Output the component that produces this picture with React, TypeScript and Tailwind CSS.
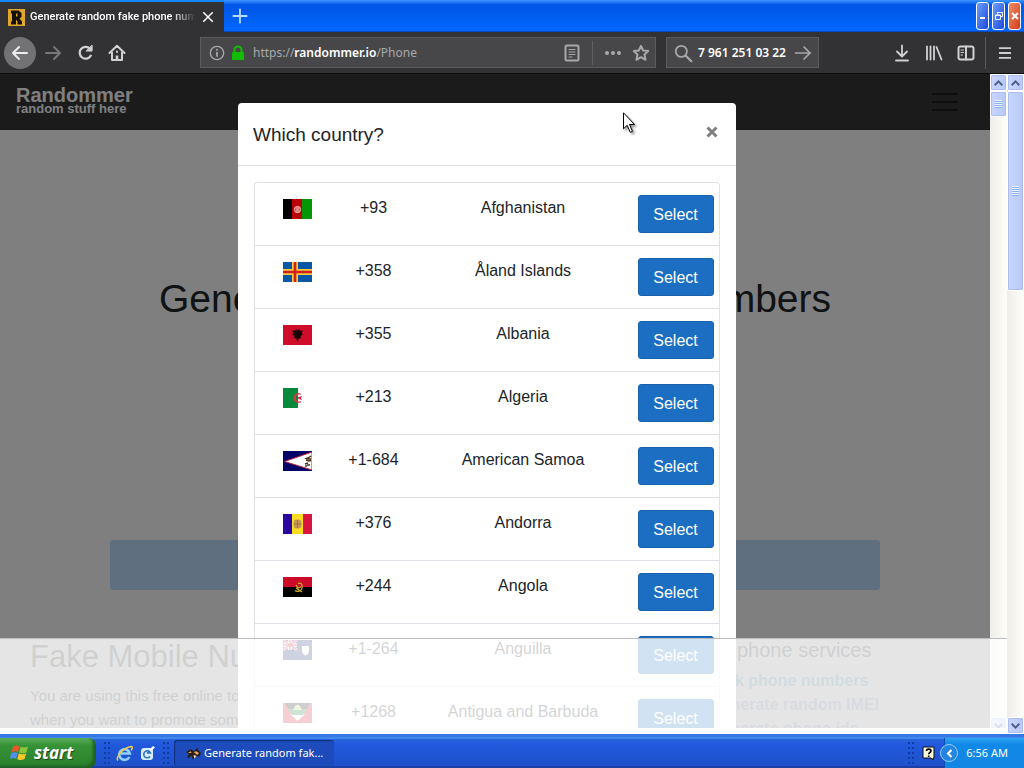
import React from "react";

const ARIAL = "font-['Liberation_Sans',Arial,sans-serif]";
const TAHOMA = "font-['Noto_Sans',Tahoma,sans-serif]";

type Country = { code: string; name: string; flag: React.ReactNode };

const countries: Country[] = [
  {
    code: "+93",
    name: "Afghanistan",
    flag: (
      <>
        <rect width="10" height="20" fill="#000" />
        <rect x="9" width="11" height="20" fill="#b80008" />
        <rect x="19" width="10" height="20" fill="#039607" />
        <circle cx="14.5" cy="10.5" r="3.2" fill="#d9564e" stroke="#e9a6a0" strokeWidth="1" />
        <path d="M12.5 9h4M13 11h3M12.5 13h4" stroke="#f3c9c2" strokeWidth=".8" />
      </>
    ),
  },
  {
    code: "+358",
    name: "Åland Islands",
    flag: (
      <>
        <rect width="29" height="20" fill="#0a58a5" />
        <path d="M12 0v20M0 10h29" stroke="#fbc93c" strokeWidth="6" />
        <path d="M12 0v20M0 10h29" stroke="#d2201f" strokeWidth="2.6" />
      </>
    ),
  },
  {
    code: "+355",
    name: "Albania",
    flag: (
      <>
        <rect width="29" height="20" fill="#cf0d2b" />
        <path d="M9.5 5l2.5 1 1-2 1.5 1.5L16 4l1 2 2.5-1-.5 3 .5 2-2 1 .5 2-2 .5-1.5 3-1.5-3-2-.5.5-2-2-1 .5-2z" fill="#1b0207" />
      </>
    ),
  },
  {
    code: "+213",
    name: "Algeria",
    flag: (
      <>
        <rect width="29" height="20" fill="#fff" />
        <rect width="15" height="20" fill="#078a3d" />
        <path d="M18 6.3a4.6 4.6 0 1 0 0 7.400 4 4 0 1 1 0-7.400z" fill="#d8393f" stroke="#d8393f" strokeWidth=".6" />
        <path d="M14.500 10l4-1.500-1.200 1.500 1.200 1.500z" fill="#d21034" stroke="#d21034" strokeWidth=".7" />
      </>
    ),
  },
  {
    code: "+1-684",
    name: "American Samoa",
    flag: (
      <>
        <rect width="29" height="20" fill="#050266" />
        <path d="M1.500 10.500L29 1v18z" fill="#fff" stroke="#b9223c" strokeWidth="1" />
        <path d="M28 5l-2 1.500-2.500 1 2.500 .500 2 0M23 9l3 1 2-.5M22 13l3-1M22 15l2 0M24 14h3" stroke="#4a3018" strokeWidth="1.400" fill="none" />
      </>
    ),
  },
  {
    code: "+376",
    name: "Andorra",
    flag: (
      <>
        <rect width="10" height="20" fill="#2b06a0" />
        <rect x="9" width="11" height="20" fill="#fcdc20" />
        <rect x="20" width="9" height="20" fill="#d81540" />
        <rect x="10.500" y="5.500" width="8" height="9" rx="3" fill="#c59a55" />
        <path d="M14.500 6v8M11 10h7" stroke="#a3703f" />
      </>
    ),
  },
  {
    code: "+244",
    name: "Angola",
    flag: (
      <>
        <rect width="29" height="10" fill="#cc0b29" />
        <rect y="10" width="29" height="10" fill="#000" />
        <path d="M15 6.500c4-1.500 5 3 3.500 6-1.500 2-4.500 2.500-6.500 1M13 8l2 3 3-1M13 11l6 4" stroke="#d3b52c" strokeWidth="1.200" fill="none" />
      </>
    ),
  },
  {
    code: "+1-264",
    name: "Anguilla",
    flag: (
      <>
        <rect width="29" height="20" fill="#0a1c6b" />
        <path d="M0 0l14 10M14 0L0 10" stroke="#fff" strokeWidth="2.400" />
        <path d="M7 0v10M0 5h14" stroke="#fff" strokeWidth="3.600" />
        <path d="M7 0v10M0 5h14M0 0l14 10M14 0L0 10" stroke="#c8102e" strokeWidth="1.300" />
        <path d="M19 6h7v5c0 3-3.500 4.500-3.500 4.500S19 14 19 11z" fill="#fff" />
      </>
    ),
  },
  {
    code: "+1268",
    name: "Antigua and Barbuda",
    flag: (
      <>
        <rect width="29" height="20" fill="#ce1126" />
        <path d="M7 11h15L14.500 18z" fill="#fff" />
        <path d="M2 0h25l-3 6H5z" fill="#0b0b0b" />
        <path d="M5 6h19l-4 6H9z" fill="#0c7a2c" />
        <path d="M10 7l2-4 2.500-1.500L17 3l2 4z" fill="#b9d36a" />
      </>
    ),
  },
];

function Icon({ children, size = 18, className = "" }: { children: React.ReactNode; size?: number; className?: string }) {
  return (
    <svg width={size} height={size} viewBox="0 0 18 18" fill="none" stroke="currentColor" strokeWidth="2" strokeLinecap="round" strokeLinejoin="round" className={className} aria-hidden="true">
      {children}
    </svg>
  );
}

function ToolButton({ label, dim = false, children }: { label: string; dim?: boolean; children: React.ReactNode }) {
  return (
    <button aria-label={label} className={`flex size-8 shrink-0 items-center justify-center ${dim ? "text-[#77777a]" : "text-[#d0d0d2]"}`}>
      {children}
    </button>
  );
}

function TitleBar() {
  return (
    <header className="flex h-8 shrink-0 bg-linear-to-b from-[#3d95ff] via-[#0055e6] via-15% to-[#0068ff] shadow-[inset_0_-1px_0_#0048c8]">
      <div className="flex h-8 w-56 items-center border-t-2 border-[#1286f7] bg-[#323234] pr-2 pl-2">
        <svg width="17" height="17" viewBox="0 0 17 17" aria-hidden="true" className="shrink-0">
          <rect width="17" height="17" fill="#e0a828" />
          <path d="M3 1.500h7.500l3 2.500v4l-2 1.500 2.500 3v3h-4.500v-3L8 10.500v5H3V13l1-1V5L3 4z" fill="#15110a" />
          <path d="M8 4.500h1.500v3H8z" fill="#e0a828" />
        </svg>
        <span className="ml-[5px] flex-1 overflow-hidden mask-r-from-85% font-['Roboto',Tahoma,sans-serif] text-[11px] leading-4 font-medium whitespace-nowrap text-white">Generate random fake phone num</span>
        <button aria-label="Close tab" className="ml-1 flex w-4 justify-center text-white">
          <Icon size={14}><path d="M3.500 3.500l11 11M14.500 3.500l-11 11" /></Icon>
        </button>
      </div>
      <button aria-label="New tab" className="flex w-8 items-center justify-center text-[#b9dcff]">
        <Icon size={16}><path d="M9 1.500v15M1.500 9h15" /></Icon>
      </button>
      <div className="ml-auto flex items-start gap-[3px] pt-[2px] pr-[3px]">
        <button aria-label="Minimize" className="flex h-7 w-[13px] items-center justify-center rounded-[3px] border border-white bg-linear-to-br from-[#6f9dfb] to-[#1b48d6]">
          <span className="mt-1 h-[2px] w-[5px] bg-white" />
        </button>
        <button aria-label="Restore" className="flex h-7 w-[13px] items-center justify-center rounded-[3px] border border-white bg-linear-to-br from-[#6f9dfb] to-[#1b48d6]">
          <svg width="8" height="8" viewBox="0 0 8 8" fill="none" stroke="#fff" aria-hidden="true"><path d="M2.500 2.500v-2h5v4h-2M.5 3h5v4.500h-5z" /><path d="M.5 3.500h5" /></svg>
        </button>
        <button aria-label="Close" className="flex h-7 w-[13px] items-center justify-center rounded-[3px] border border-white bg-linear-to-br from-[#f08a68] to-[#cf3a0c]">
          <svg width="8" height="8" viewBox="0 0 8 8" stroke="#fff" strokeWidth="2" aria-hidden="true"><path d="M1 1l6 6M7 1L1 7" /></svg>
        </button>
      </div>
    </header>
  );
}

function ToolBar() {
  return (
    <nav aria-label="Browser" className={`flex h-[42px] shrink-0 items-center border-b border-[#0c0c0d] bg-[#323234] pr-[3px] pl-1 ${TAHOMA}`}>
      <button aria-label="Back" className="mr-px flex size-8 shrink-0 items-center justify-center rounded-full bg-[#727274] text-[#ececec]">
        <Icon><path d="M16 9H2M8 3L2 9l6 6" /></Icon>
      </button>
      <ToolButton label="Forward" dim><Icon><path d="M2 9h14M10 3l6 6-6 6" /></Icon></ToolButton>
      <ToolButton label="Reload">
        <Icon size={17}><path d="M13.800 5A6.300 6.300 0 1 0 15 11.500" strokeLinecap="butt" strokeWidth="2.400" /><path d="M16 1.500v6h-6z" fill="currentColor" strokeWidth="1" /></Icon>
      </ToolButton>
      <ToolButton label="Home">
        <Icon><path d="M1.500 9L9 1.800 16.500 9M4 8.500v7.500h10V8.500" /><path d="M9 16v-4.500" strokeWidth="2.600" strokeLinecap="butt" /><path d="M9 7.500v.4" /></Icon>
      </ToolButton>
      <div className="ml-[67px] flex h-[31px] min-w-0 flex-1 items-center border border-[#5b5b5d] bg-[#474749] pr-[6px] pl-2 text-[#a8a8aa]">
        <Icon size={16} className="shrink-0"><circle cx="9" cy="9" r="7.500" strokeWidth="1.500" /><path d="M9 8.500v4" /><path d="M9 5.300v.2" /></Icon>
        <svg width="14" height="16" viewBox="0 0 14 16" className="ml-[6px] shrink-0" aria-hidden="true"><path d="M3.500 8V5a3.500 3.500 0 0 1 7 0v3" fill="none" stroke="#12bc00" strokeWidth="2" /><rect x="1" y="7" width="12" height="8" rx="1" fill="#12bc00" /></svg>
        <div role="textbox" aria-label="Address" className="ml-2 flex-1 text-[12px] leading-4 whitespace-nowrap">
          https://<span className="font-semibold text-white">randommer.io</span>/Phone
        </div>
        <button aria-label="Reader view" className="flex w-4 justify-center">
          <Icon size={18} className="shrink-0"><rect x="2.500" y="1.500" width="13" height="15" rx="1.500" /><path d="M6 5.500h6M6 8h6M6 10.500h6M6 13h3" strokeWidth="1" /></Icon>
        </button>
        <span className="ml-3 h-6 w-px bg-[#5f5f61]" />
        <button aria-label="Page actions" className="ml-3 flex w-4 justify-center">
          <svg width="18" height="6" viewBox="0 0 18 6" fill="currentColor" aria-hidden="true" className="shrink-0"><circle cx="3" cy="3" r="2" /><circle cx="9" cy="3" r="2" /><circle cx="15" cy="3" r="2" /></svg>
        </button>
        <button aria-label="Bookmark" className="ml-3 flex w-4 justify-center">
          <Icon size={18} className="shrink-0"><path d="M9 1.800l2.200 4.700 5 .6-3.700 3.500 1 5.200L9 13.200l-4.500 2.600 1-5.200L1.800 7.100l5-.6z" /></Icon>
        </button>
      </div>
      <div className="mr-[67px] ml-[10px] flex h-[31px] w-[153px] shrink-0 items-center border border-[#5b5b5d] bg-[#474749] px-[6px] text-[#a8a8aa]">
        <Icon size={20} className="shrink-0"><circle cx="7.500" cy="7.500" r="5" strokeWidth="1.600" /><path d="M11.500 11.500l5 5" /></Icon>
        <div className="ml-1 flex flex-1 justify-end overflow-hidden">
          <input aria-label="Search" defaultValue="7 961 251 03 22" className="w-[92px] shrink-0 bg-transparent text-[12px] leading-4 font-semibold text-white outline-none" />
        </div>
        <button aria-label="Go" className="ml-1"><Icon size={18}><path d="M1.500 9h15M10 3l6 6-6 6" strokeWidth="1.700" /></Icon></button>
      </div>
      <ToolButton label="Downloads"><Icon><path d="M9 1.500v10.500M4 7.500L9 12.500l5-5M3 16.500h12" strokeWidth="1.800" /></Icon></ToolButton>
      <ToolButton label="Library"><Icon><path d="M2 2.500v13M5.500 2.500v13M9 2.500v13M11.500 3l5 12.500" strokeWidth="1.800" /></Icon></ToolButton>
      <ToolButton label="Sidebars"><Icon><rect x="1.500" y="2.500" width="15" height="13" rx="2" /><path d="M9 2.500v13" /><path d="M4 6h2.500M4 8.500h2.500M4 11h1.500" strokeWidth="1.100" /></Icon></ToolButton>
      <span className="mx-[3px] h-8 w-px bg-[#5a5a5c]" />
      <ToolButton label="Menu"><Icon size={16}><path d="M3 3.500h12M3 9h12M3 14.500h12" /></Icon></ToolButton>
    </nav>
  );
}

function ScrollBar({ thumb, grip }: { thumb: string; grip: string }) {
  const box = "flex shrink-0 items-center justify-center rounded-[2px] border border-white bg-linear-to-r from-[#c9d6fd] to-[#b7c9fa] shadow-[inset_0_0_0_1px_#adbdf0]";
  return (
    <div className="flex w-[17px] shrink-0 flex-col bg-linear-to-r from-[#efeee8] to-[#fdfdfa]">
      <button aria-label="Scroll up" className={`${box} h-[17px]`}>
        <svg width="9" height="6" viewBox="0 0 9 6" fill="none" stroke="#4d6185" strokeWidth="2" aria-hidden="true"><path d="M.7 5.200L4.500 1.400l3.800 3.800" /></svg>
      </button>
      <div className={`${box} ${thumb}`}>
        <div className={`w-[7px] bg-[repeating-linear-gradient(to_bottom,#eef4fe_0_1px,#8cb0f8_1px_2px)] ${grip}`} />
      </div>
      <div className="flex-1" />
      <button aria-label="Scroll down" className={`${box} h-[17px]`}>
        <svg width="9" height="6" viewBox="0 0 9 6" fill="none" stroke="#4d6185" strokeWidth="2" aria-hidden="true"><path d="M.7.8l3.800 3.800L8.300.8" /></svg>
      </button>
    </div>
  );
}

function SitePage() {
  return (
    <div className="flex h-full flex-col overflow-hidden bg-white">
      <div className="flex h-14 shrink-0 items-center justify-between bg-[#343635] px-4">
        <a href="#home" className="text-white">
          <span className="block text-[20px] leading-[14px] font-bold">Randommer</span>
          <span className="block text-[13px] leading-[14px] font-bold">random stuff here</span>
        </a>
        <button aria-label="Toggle navigation" className="mr-[14px] text-[#1b1d1c]">
          <svg width="30" height="20" viewBox="0 0 30 20" stroke="currentColor" strokeWidth="2" aria-hidden="true"><path d="M2 2h26M2 10h26M2 18h26" /></svg>
        </button>
      </div>
      <div className="flex shrink-0 flex-col items-center px-[110px] pt-[145px]">
        <h1 className="text-[39px] leading-[48px] whitespace-nowrap text-[#212529]">Generate random fake phone numbers</h1>
        <button aria-label="Choose country" className="mt-[217px] h-[50px] w-full rounded-[3px] bg-[#bfdfff]" />
      </div>
      <div className="flex shrink-0 justify-between pt-12 pr-[111px] pl-[30px] text-[#212529]">
        <div>
          <h2 className="text-[31px] leading-[38px] whitespace-nowrap">Fake Mobile Numbers</h2>
          <p className="mt-2 text-[15px] leading-6 whitespace-nowrap">
            You are using this free online tool to generate numbers
            <br />
            when you want to promote some services
          </p>
        </div>
        <div className="text-[16px] leading-6 whitespace-nowrap">
          <h3 className="text-[20px]">All phone services</h3>
          <ul className="mt-[7px] font-bold text-[#3aa0c8]">
            <li><a href="#bulk">Bulk phone numbers</a></li>
            <li className="text-[#7597c8]"><a href="#imei">Generate random IMEI</a></li>
            <li className="text-[#7597c8]"><a href="#ids">Generate phone ids</a></li>
          </ul>
        </div>
      </div>
    </div>
  );
}

function CountryModal() {
  return (
    <div className="absolute inset-0 flex items-start justify-center overflow-hidden bg-black/50 pt-[29px] pr-4">
      <div role="dialog" aria-labelledby="modal-title" className="relative w-[498px] rounded-[4px] bg-white text-[#212529]">
        <div className="flex h-[63px] items-start justify-between border-b border-[#dee2e6] px-[15px] pt-[17px]">
          <h5 id="modal-title" className="text-[19px] leading-[30px]">Which country?</h5>
          <button aria-label="Close" className="mt-[6px] mr-[3px] text-[#7f7f7f]">
            <svg width="12" height="12" viewBox="0 0 12 12" stroke="currentColor" strokeWidth="3" aria-hidden="true"><path d="M1.500 1.500l9 9M10.500 1.500l-9 9" /></svg>
          </button>
        </div>
        <div className="p-4">
          <table className="w-full table-fixed border-separate border-spacing-0 rounded-[4px] border-x border-t border-[#dee2e6] text-center text-[16px] leading-6">
            <colgroup>
              <col className="w-[78px]" />
              <col className="w-[81px]" />
              <col />
              <col className="w-[87px]" />
            </colgroup>
            <tbody>
              {countries.map((c) => (
                <tr key={c.name} className="h-[63px] align-top">
                  <td className="border-b border-[#dee2e6] pt-4 pl-7">
                    <svg width="29" height="20" viewBox="0 0 29 20" role="img" aria-label={`Flag of ${c.name}`} className="block">{c.flag}</svg>
                  </td>
                  <td className="border-b border-[#dee2e6] pt-[13px]">{c.code}</td>
                  <td className="border-b border-[#dee2e6] pt-[13px]">{c.name}</td>
                  <td className="border-b border-[#dee2e6] pt-3">
                    <button className="h-[38px] w-[76px] rounded-[3px] border border-[#1861ac] bg-[#1b6ec2] pt-px text-white">Select</button>
                  </td>
                </tr>
              ))}
            </tbody>
          </table>
        </div>
        <svg width="14" height="23" viewBox="0 0 14 23" className="absolute top-[9px] left-[385px] drop-shadow-[2px_2px_1px_#00000066]" aria-hidden="true">
          <path d="M.5.8v16l3.700-3.500 3 7 2.300-1-3-6.800h5z" fill="#fff" stroke="#000" />
        </svg>
      </div>
    </div>
  );
}

function Grip() {
  return (
    <svg width="7" height="22" viewBox="0 0 7 22" fill="#123da0" aria-hidden="true" className="shrink-0">
      {[0, 5, 10, 15, 20].map((y) => <path key={y} d={`M0 ${y}h2v2h-2zM4 ${y}h2v2h-2z`} />)}
    </svg>
  );
}

function TaskBar() {
  return (
    <footer className={`flex h-[34px] shrink-0 items-end bg-linear-to-b from-[#2f6fd8] via-[#2158dd] via-30% to-[#1e50c8] shadow-[inset_0_3px_0_#3478e4,inset_0_5px_0_#4288ec,inset_0_-2px_0_#1941a5] ${TAHOMA}`}>
      <button className="flex h-[30px] w-24 items-center rounded-r-[8px] bg-linear-to-b from-[#5cad5c] via-[#369336] via-25% to-[#2a7f2c] pl-[10px] shadow-[inset_-3px_-2px_3px_#1c5f22]">
        <svg width="20" height="18" viewBox="0 0 20 18" aria-hidden="true">
          <path d="M3 2.500C5 1 7.500 1.200 9.500 2.300L8 8C6 7 3.800 7 1.500 8.200z" fill="#e8592b" />
          <path d="M10.500 2.800c2.500 1.200 5 1 7.500-.3l-1.600 5.700c-2.200 1.200-5 1.200-7.300.2z" fill="#8cc63e" />
          <path d="M1.200 9.300C3.500 8 5.800 8 7.700 9l-1.500 5.700c-2-1-4.200-1-6.400.2z" fill="#4f8ff0" />
          <path d="M8.800 9.500c2.400 1.100 5 1.100 7.300-.2L14.500 15c-2.300 1.300-4.900 1.300-7.200.2z" fill="#fcc92d" />
        </svg>
        <span className="ml-1 text-[17px] leading-6 font-bold text-white italic [text-shadow:1px_1px_1px_#17491b]">start</span>
      </button>
      <div className="flex h-[30px] flex-1 items-center pl-2">
        <Grip />
        <a href="#browser" aria-label="Internet Explorer" className="ml-[5px]">
          <svg width="17" height="17" viewBox="0 0 17 17" fill="none" aria-hidden="true">
            <path d="M13.300 12A5.300 5.300 0 1 1 13.800 8.500H5" stroke="#8fd2ff" strokeWidth="2.600" />
            <path d="M2 15.500C-1 13 6 3 15.500 1.500c1.200 0 1 2-.5 4" stroke="#f6c84b" strokeWidth="1.500" />
          </svg>
        </a>
        <a href="#desktop" aria-label="Show desktop" className="ml-[6px]">
          <svg width="17" height="17" viewBox="0 0 17 17" aria-hidden="true">
            <rect x="2" y="3" width="12" height="12" rx="3" fill="#d7ecff" />
            <path d="M11 11.500A3.500 3.500 0 1 1 11.500 8H8M8 8.500l6-6" fill="none" stroke="#2b6fb8" strokeWidth="1.500" />
            <path d="M10 5l4-4 2 1.500-4.500 4z" fill="#fff" />
          </svg>
        </a>
        <div className="ml-[7px]"><Grip /></div>
        <button className="ml-1 flex h-[26px] w-40 items-center rounded-[3px] bg-[#1d4bbb] pl-3 text-[11px] leading-4 text-white shadow-[inset_1px_1px_1px_#122f80]">
          <svg width="15" height="14" viewBox="0 0 16 14" aria-hidden="true">
            <path d="M0 6l5-3 4 2 3-4 1 3 3 3-2 4-3-1-2 3H7L6 10l-3 2H1l2-4z" fill="#2a1c14" />
            <path d="M8 6l3-1 3 2-2 2zM2 7l3-2 1 2z" fill="#e0a45a" />
            <path d="M8 9l3 1-2 3z" fill="#f2e2c8" />
          </svg>
          <span className="ml-[3px] truncate">Generate random fak...</span>
        </button>
        <div className="ml-auto"><Grip /></div>
        <svg width="14" height="15" viewBox="0 0 14 15" className="mr-2 ml-[7px]" aria-hidden="true">
          <path d="M1 1h11v11h-1v2l-2-2H1z" fill="#fbf9d8" stroke="#111" />
          <path d="M4.500 5c0-2.500 4.500-2.500 4.500 0 0 1.500-2.300 1.500-2.300 3.300M6.700 9.500V11" fill="none" stroke="#000" strokeWidth="1.600" />
        </svg>
      </div>
      <div className="flex h-[30px] items-center bg-linear-to-b from-[#2ba5f2] via-[#1189e8] via-20% to-[#1286e2] pr-4 text-[11px] leading-4 text-white shadow-[inset_1px_0_0_#0b4fae]">
        <button aria-label="Show hidden icons" className="-ml-1 flex size-[18px] items-center justify-center rounded-full border border-[#8fd0fb] bg-[#2484e0]">
          <svg width="7" height="9" viewBox="0 0 7 9" fill="none" stroke="#fff" strokeWidth="2" aria-hidden="true"><path d="M5.500 1L2 4.500 5.500 8" /></svg>
        </button>
        <time className="ml-2">6:56 AM</time>
      </div>
    </footer>
  );
}

export default function App() {
  return (
    <div className={`flex h-screen flex-col overflow-hidden bg-white ${ARIAL}`}>
      <TitleBar />
      <ToolBar />
      <main className="flex min-h-0 flex-1">
        <div className="relative flex min-w-0 flex-1">
          <div className="relative min-w-0 flex-1">
            <SitePage />
            <CountryModal />
          </div>
          <ScrollBar thumb="h-[26px]" grip="h-[8px]" />
          <div className="absolute inset-x-0 bottom-0 flex h-24 flex-col border-t border-[#bdbdbd]">
            <div className="flex-1 bg-white/80" />
            <div className="h-[6px] bg-white" />
          </div>
        </div>
        <ScrollBar thumb="h-[200px]" grip="h-[10px]" />
      </main>
      <TaskBar />
    </div>
  );
}
